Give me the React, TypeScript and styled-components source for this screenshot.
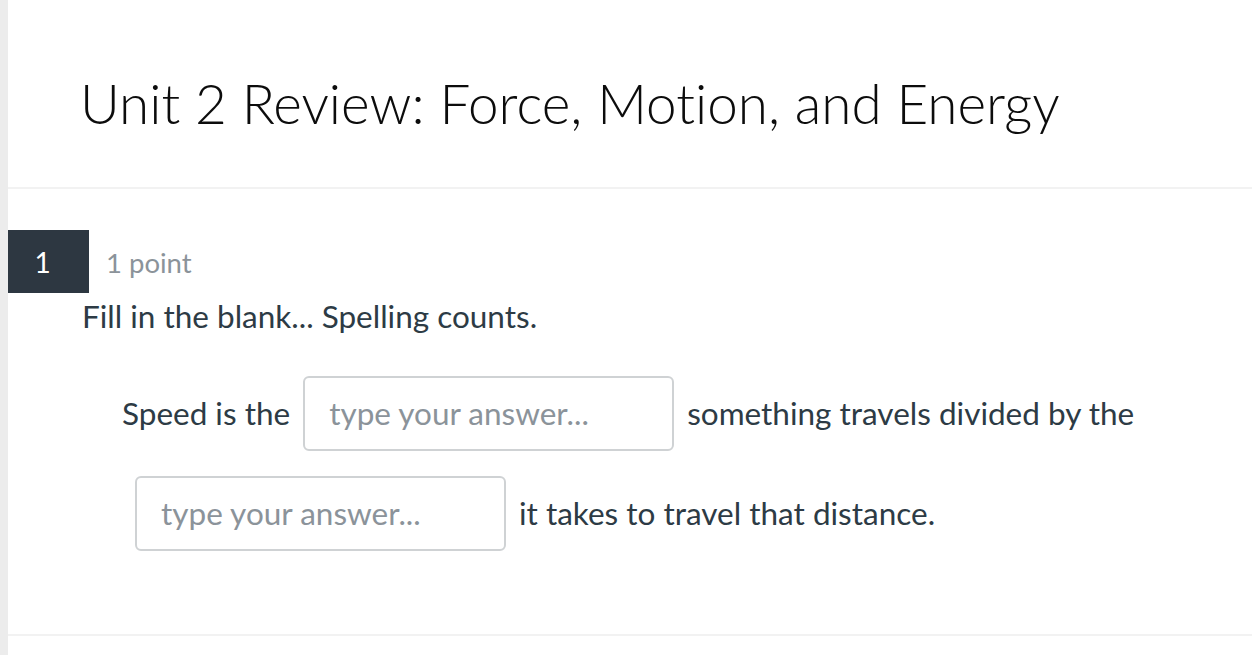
import React from "react"
import styled, { createGlobalStyle } from "styled-components"

const GlobalStyle = createGlobalStyle`
  html, body {
    margin: 0;
    padding: 0;
    background: #ffffff;
  }
  body {
    font-family: Lato, "Open Sans", sans-serif;
    font-variant-ligatures: none;
  }
`

const Page = styled.div`
  min-height: 655px;
  border-left: 8px solid #ececec;
  background: #ffffff;
  overflow: hidden;
`

const Header = styled.header`
  height: 189px;
  padding: 71px 0 0 72px;
  box-sizing: border-box;
  border-bottom: 2px solid #f2f2f2;
`

const Title = styled.h1`
  margin: 0;
  font-size: 54.8px;
  font-weight: 300;
  line-height: 1.2;
  color: #0c0c0c;
  white-space: nowrap;
`

const Question = styled.section`
  padding: 41px 0 71px;
  border-bottom: 2px solid #f2f2f2;
`

const QuestionHead = styled.div`
  display: flex;
  align-items: center;
  margin-left: -8px;
  gap: 17px;
`

const NumberBadge = styled.div`
  width: 89px;
  height: 63px;
  background: #2d3741;
  color: #ffffff;
  display: flex;
  align-items: center;
  justify-content: center;
  padding-right: 4px;
  box-sizing: border-box;
  font-size: 28px;
`

const Points = styled.span`
  font-size: 27.5px;
  padding-top: 1px;
  color: #8b939a;
`

const Prompt = styled.p`
  margin: 0;
  padding-left: 74px;
  font-size: 31.5px;
  line-height: 46px;
  color: #2d3b45;
`

const Blanks = styled.div`
  margin-top: 24px;
  padding-left: 114px;
  width: 1060px;
  font-size: 31.5px;
  line-height: 100px;
  color: #2d3b45;
`

const Blank = styled.input`
  display: inline-block;
  vertical-align: baseline;
  width: 371px;
  height: 75px;
  margin: 0 13px;
  padding: 0 24px;
  box-sizing: border-box;
  border: 2px solid #cfd2d4;
  border-radius: 6px;
  background: #ffffff;
  font-family: inherit;
  font-size: 31.5px;
  color: #2d3b45;
  &::placeholder {
    color: #8b939a;
  }
`

export default function App() {
  return (
    <>
      <GlobalStyle />
      <Page>
        <Header>
          <Title>Unit 2 Review: Force, Motion, and Energy</Title>
        </Header>
        <Question>
          <QuestionHead>
            <NumberBadge>1</NumberBadge>
            <Points>1 point</Points>
          </QuestionHead>
          <Prompt>Fill in the blank... Spelling counts.</Prompt>
          <Blanks>
            Speed is the<Blank placeholder="type your answer..." />something travels divided by
            the<Blank placeholder="type your answer..." />it takes to travel that distance.
          </Blanks>
        </Question>
      </Page>
    </>
  )
}
